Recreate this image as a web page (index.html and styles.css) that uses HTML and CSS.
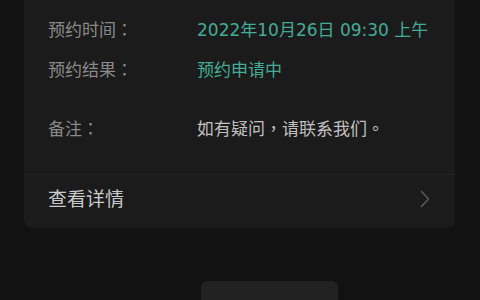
FILE: index.html
```html
<!DOCTYPE html>
<html lang="zh-CN">
<head>
<meta charset="utf-8">
<title>预约详情</title>
<link rel="stylesheet" href="styles.css">
</head>
<body>
<div class="page">
  <section class="card">
    <div class="info">
      <div class="row">
        <span class="label">预约时间：</span>
        <span class="value accent">2022年10月26日 09:30 上午</span>
      </div>
      <div class="row">
        <span class="label">预约结果：</span>
        <span class="value accent">预约申请中</span>
      </div>
      <div class="row remark">
        <span class="label">备注：</span>
        <span class="value">如有疑问，请联系我们。</span>
      </div>
    </div>
    <div class="link">
      <span class="link-text">查看详情</span>
      <svg class="chevron" width="10" height="18" viewBox="0 0 10 18"><path d="M1.5 1.5 L8.5 9 L1.5 16.5" fill="none" stroke="#5a5a5a" stroke-width="1.5" stroke-linecap="round" stroke-linejoin="round"/></svg>
    </div>
  </section>
  <div class="actions">
    <div class="button"></div>
  </div>
</div>
</body>
</html>
```

FILE: styles.css
```css
html, body {
  margin: 0;
  padding: 0;
  background: #121212;
  width: 480px;
  height: 300px;
  overflow: hidden;
  font-family: "DejaVu Sans", "Noto Sans CJK TC", sans-serif;
  font-feature-settings: "locl" 0;
}

.page {
  padding: 0 25px 0 24px;
}

.card {
  background: #1b1b1b;
  border-radius: 0 0 8px 8px;
}

.info {
  display: flex;
  flex-direction: column;
  gap: 16px;
  padding: 18px 24px 33px 24px;
  border-bottom: 1px solid #242424;
}

.row {
  display: flex;
  align-items: center;
  font-size: 17px;
  line-height: 24px;
}

.row.remark {
  margin-top: 19px;
}

.label {
  width: 149px;
  flex: none;
  color: #8a8a8a;
}

.value {
  color: #c0c0c0;
}

.value.accent {
  color: #45ab96;
}

.link {
  display: flex;
  align-items: center;
  justify-content: space-between;
  padding: 12px 25px 17px 24px;
  height: 24px;
}

.link-text {
  font-size: 19px;
  line-height: 24px;
  color: #cacaca;
}

.chevron {
  display: block;
}

.actions {
  padding-top: 53px;
  padding-left: 177px;
}

.button {
  width: 137px;
  height: 40px;
  background: #222222;
  border-radius: 6px;
}
```
